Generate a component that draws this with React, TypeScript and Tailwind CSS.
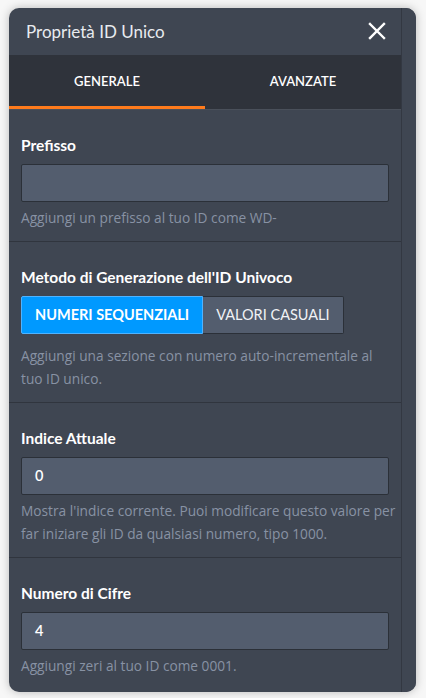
import React from "react";

const font = { fontFamily: "Lato, 'Noto Sans', sans-serif" };

function Section({
  label,
  children,
  help,
  last,
}: {
  label: string;
  children: React.ReactNode;
  help: React.ReactNode;
  last?: boolean;
}) {
  return (
    <div
      className={`px-3 pt-[25px] ${last ? "pb-[15px]" : "pb-[12px] border-b border-[#30353e]"}`}
    >
      <div className="text-[15.5px] font-bold leading-5 text-white">{label}</div>
      {children}
      <p className="mr-[-8px] font-['Open_Sans',sans-serif] text-[13.7px] leading-[23px] text-[#8892a4]">
        {help}
      </p>
    </div>
  );
}

function Field({ value }: { value?: string }) {
  return (
    <div className="mt-[9px] mb-[4px] flex h-[38px] items-center rounded-[2px] border border-[#2b3038] bg-[#535d6e] px-[13px] text-[14.5px] font-semibold text-white">
      {value}
    </div>
  );
}

export default function App() {
  return (
    <div className="min-h-[698px] bg-[#f7f7f7] pt-2 pl-[9px]" style={font}>
      <div className="flex w-[407px] overflow-hidden rounded-[10px] bg-[#3f4652] shadow-[0_0_10px_rgba(0,0,0,0.25)]">
        <div className="w-[392px]">
          {/* header */}
          <div className="flex h-[47px] items-center justify-between pl-[17px] pr-[15px]">
            <span className="text-[17px] text-[#e8ebef]">Proprietà ID Unico</span>
            <svg width="18" height="18" viewBox="0 0 18 18" className="mt-[-1px]">
              <path
                d="M2 2L16 16M16 2L2 16"
                stroke="#ffffff"
                strokeWidth="2.4"
                strokeLinecap="square"
              />
            </svg>
          </div>

          {/* tabs */}
          <div className="flex h-[55px] border-b border-[#4a505a] bg-[#2f333b] text-[13px] font-semibold text-white">
            <div className="flex flex-1 flex-col">
              <div className="flex flex-1 items-center justify-center pt-[2px]">GENERALE</div>
              <div className="h-[3px] bg-[#ff7b1c]" />
            </div>
            <div className="flex flex-1 items-center justify-center pb-[1px]">AVANZATE</div>
          </div>

          <Section label="Prefisso" help="Aggiungi un prefisso al tuo ID come WD-">
            <Field />
          </Section>

          <Section
            label="Metodo di Generazione dell'ID Univoco"
            help="Aggiungi una sezione con numero auto-incrementale al tuo ID unico."
          >
            <div className="mt-[9px] mb-[10px] flex h-[38px] text-[14.5px]">
              <div className="flex items-center rounded-l-[2px] border border-[#4fb3ff] bg-[#0099ff] px-[13px] font-bold text-white">
                NUMERI SEQUENZIALI
              </div>
              <div className="flex items-center rounded-r-[2px] border border-l-0 border-[#2b3038] bg-[#535d6e] px-[13px] text-[#f0f2f5]">
                VALORI CASUALI
              </div>
            </div>
          </Section>

          <Section
            label="Indice Attuale"
            help="Mostra l'indice corrente. Puoi modificare questo valore per far iniziare gli ID da qualsiasi numero, tipo 1000."
          >
            <Field value="0" />
          </Section>

          <Section label="Numero di Cifre" help="Aggiungi zeri al tuo ID come 0001." last>
            <Field value="4" />
          </Section>
        </div>
        {/* scrollbar gutter */}
        <div className="w-[15px] border-l border-[#333842] bg-[#3f4652]" />
      </div>
    </div>
  );
}
